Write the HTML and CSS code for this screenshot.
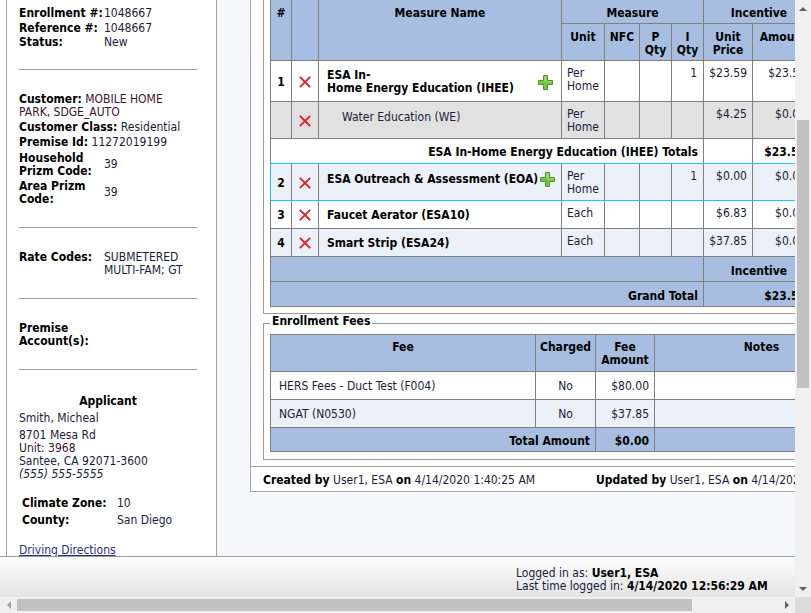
FILE: index.html
```html
<!DOCTYPE html>
<html>
<head>
<meta charset="utf-8">
<title>Enrollment</title>
<link rel="stylesheet" href="styles.css">
</head>
<body>
<div class="screen">
  <div class="viewport">
    <div class="content">
      <aside class="side">
        <div class="side-panel">
          <div class="sec-ids">
            <div class="kv"><span class="k">Enrollment #:</span><span class="v">1048667</span></div>
            <div class="kv"><span class="k">Reference #:</span><span class="v">1048667</span></div>
            <div class="kv"><span class="k">Status:</span><span class="v">New</span></div>
          </div>
          <div class="rule"></div>

          <div class="sec sec-cust">
            <p class="line"><b>Customer:</b> <span class="v-cust">MOBILE HOME PARK, SDGE_AUTO</span></p>
            <p class="line"><b>Customer Class:</b> <span class="v">Residential</span></p>
            <p class="line"><b>Premise Id:</b> <span class="v">11272019199</span></p>
            <div class="kv2 mid hh"><span class="k">Household Prizm Code:</span><span class="v">39</span></div>
            <div class="kv2 mid ap"><span class="k">Area Prizm Code:</span><span class="v">39</span></div>
          </div>
          <div class="rule"></div>

          <div class="sec">
            <div class="kv2"><span class="k">Rate Codes:</span><span class="v">SUBMETERED MULTI-FAM; GT</span></div>
          </div>
          <div class="rule"></div>

          <div class="sec">
            <div class="kv2"><span class="k">Premise Account(s):</span><span class="v"></span></div>
          </div>
          <div class="rule"></div>

          <div class="sec-app">
            <div class="app-title">Applicant</div>
            <div class="app-name">Smith, Micheal</div>
            <div class="app-addr">
              <div>8701 Mesa Rd</div>
              <div class="v-cust">Unit: 3968</div>
              <div>Santee, CA 92071-3600</div>
              <div class="phone">(555) 555-5555</div>
            </div>
            <div class="climate">
              <div class="crow"><span class="ck">Climate Zone:</span><span class="v">10</span></div>
              <div class="crow"><span class="ck">County:</span><span class="v">San Diego</span></div>
            </div>
            <a class="dir-link" href="#">Driving Directions</a>
          </div>
        </div>
      </aside>

      <main class="main">
        <div class="card">
          <div class="card-body">
            <fieldset class="fs fs-measures">
              <table class="grid measures">
                <colgroup>
                  <col class="c-num"><col class="c-del"><col class="c-name"><col class="c-unit"><col class="c-nfc"><col class="c-pq"><col class="c-iq"><col class="c-price"><col class="c-amt">
                </colgroup>
                <thead>
                  <tr class="h1">
                    <th rowspan="2">#</th>
                    <th rowspan="2"></th>
                    <th rowspan="2">Measure Name</th>
                    <th colspan="4">Measure</th>
                    <th colspan="2">Incentive</th>
                  </tr>
                  <tr class="h2">
                    <th>Unit</th>
                    <th>NFC</th>
                    <th>P<br>Qty</th>
                    <th>I<br>Qty</th>
                    <th>Unit<br>Price</th>
                    <th>Amount</th>
                  </tr>
                </thead>
                <tbody>
                  <tr class="r-white">
                    <td class="num">1</td>
                    <td class="del"><svg class="x-icon" viewBox="0 0 12 12" width="12" height="12"><path d="M1.5 1.5L10.5 10.5M10.5 1.5L1.5 10.5"/></svg></td>
                    <td class="name"><div class="name-wrap"><span class="name-text">ESA In-<br>Home Energy Education (IHEE)</span><svg class="plus-icon" viewBox="0 0 15 15" width="15" height="15"><path d="M5.5 0.5h4v5h5v4h-5v5h-4v-5h-5v-4h5z"/><path class="hl" d="M6.5 1.5h2v5h5v1h-5v-1h-2z"/></svg></div></td>
                    <td class="unit">Per<br>Home</td>
                    <td></td>
                    <td></td>
                    <td class="qty">1</td>
                    <td class="price">$23.59</td>
                    <td class="amt">$23.59</td>
                  </tr>
                  <tr class="r-gray">
                    <td class="num"></td>
                    <td class="del"><svg class="x-icon" viewBox="0 0 12 12" width="12" height="12"><path d="M1.5 1.5L10.5 10.5M10.5 1.5L1.5 10.5"/></svg></td>
                    <td class="name sub">Water Education (WE)</td>
                    <td class="unit">Per<br>Home</td>
                    <td></td>
                    <td></td>
                    <td class="qty"></td>
                    <td class="price">$4.25</td>
                    <td class="amt">$0.00</td>
                  </tr>
                  <tr class="r-total">
                    <td colspan="7" class="total-label">ESA In-Home Energy Education (IHEE) Totals</td>
                    <td></td>
                    <td class="amt strong">$23.59</td>
                  </tr>
                  <tr class="r-alt r-sel">
                    <td class="num">2</td>
                    <td class="del"><svg class="x-icon" viewBox="0 0 12 12" width="12" height="12"><path d="M1.5 1.5L10.5 10.5M10.5 1.5L1.5 10.5"/></svg></td>
                    <td class="name"><div class="name-wrap"><span class="name-text">ESA Outreach &amp; Assessment (EOA)</span><svg class="plus-icon" viewBox="0 0 15 15" width="15" height="15"><path d="M5.5 0.5h4v5h5v4h-5v5h-4v-5h-5v-4h5z"/><path class="hl" d="M6.5 1.5h2v5h5v1h-5v-1h-2z"/></svg></div></td>
                    <td class="unit">Per<br>Home</td>
                    <td></td>
                    <td></td>
                    <td class="qty">1</td>
                    <td class="price">$0.00</td>
                    <td class="amt">$0.00</td>
                  </tr>
                  <tr class="r-white">
                    <td class="num">3</td>
                    <td class="del"><svg class="x-icon" viewBox="0 0 12 12" width="12" height="12"><path d="M1.5 1.5L10.5 10.5M10.5 1.5L1.5 10.5"/></svg></td>
                    <td class="name">Faucet Aerator (ESA10)</td>
                    <td class="unit">Each</td>
                    <td></td>
                    <td></td>
                    <td class="qty"></td>
                    <td class="price">$6.83</td>
                    <td class="amt">$0.00</td>
                  </tr>
                  <tr class="r-alt">
                    <td class="num">4</td>
                    <td class="del"><svg class="x-icon" viewBox="0 0 12 12" width="12" height="12"><path d="M1.5 1.5L10.5 10.5M10.5 1.5L1.5 10.5"/></svg></td>
                    <td class="name">Smart Strip (ESA24)</td>
                    <td class="unit">Each</td>
                    <td></td>
                    <td></td>
                    <td class="qty"></td>
                    <td class="price">$37.85</td>
                    <td class="amt">$0.00</td>
                  </tr>
                </tbody>
                <tfoot>
                  <tr class="f-inc">
                    <td colspan="7"></td>
                    <th colspan="2">Incentive</th>
                  </tr>
                  <tr class="f-grand">
                    <th colspan="7" class="right">Grand Total</th>
                    <th colspan="2" class="right amt-total">$23.59</th>
                  </tr>
                </tfoot>
              </table>
            </fieldset>

            <fieldset class="fs fs-fees">
              <legend>Enrollment Fees</legend>
              <table class="grid fees">
                <colgroup>
                  <col class="c-fee"><col class="c-charged"><col class="c-feeamt"><col class="c-notes">
                </colgroup>
                <thead>
                  <tr>
                    <th>Fee</th>
                    <th>Charged</th>
                    <th>Fee<br>Amount</th>
                    <th>Notes</th>
                  </tr>
                </thead>
                <tbody>
                  <tr class="r-white">
                    <td class="fee-name">HERS Fees - Duct Test (F004)</td>
                    <td class="center">No</td>
                    <td class="fee-amt">$80.00</td>
                    <td></td>
                  </tr>
                  <tr class="r-alt">
                    <td class="fee-name">NGAT (N0530)</td>
                    <td class="center">No</td>
                    <td class="fee-amt">$37.85</td>
                    <td></td>
                  </tr>
                </tbody>
                <tfoot>
                  <tr>
                    <th colspan="2" class="right">Total Amount</th>
                    <th class="right">$0.00</th>
                    <th></th>
                  </tr>
                </tfoot>
              </table>
            </fieldset>
          </div>
          <div class="audit">
            <div class="created"><b>Created by</b> User1, ESA <b>on</b> 4/14/2020 1:40:25 AM</div>
            <div class="updated"><b>Updated by</b> User1, ESA <b>on</b> 4/14/2020 1:40:25 AM</div>
          </div>
        </div>
      </main>
    </div>
    <footer class="footer">
      <div class="login-info">
        <div>Logged in as: <b>User1, ESA</b></div>
        <div>Last time logged in: <b>4/14/2020 12:56:29 AM</b></div>
      </div>
    </footer>
  </div>

  <div class="vscroll">
    <div class="sb-btn"><span class="tri tri-up"></span></div>
    <div class="vtrack"><div class="vthumb"></div></div>
    <div class="sb-btn"><span class="tri tri-down"></span></div>
  </div>
  <div class="hscroll">
    <div class="sb-btn h"><span class="tri tri-left"></span></div>
    <div class="htrack"><div class="hthumb"></div></div>
    <div class="sb-btn h"><span class="tri tri-right"></span></div>
  </div>
  <div class="corner"></div>
</div>
</body>
</html>
```

FILE: styles.css
```css
* { box-sizing: border-box; }
html, body { margin: 0; padding: 0; }
body {
  width: 811px;
  height: 613px;
  overflow: hidden;
  background: #fff;
  font-family: "DejaVu Sans Condensed", "DejaVu Sans", Verdana, sans-serif;
  font-size: 12px;
  line-height: 13px;
  color: #1b1b3a;
}
p { margin: 0; }

.screen {
  display: grid;
  grid-template-columns: 795px 16px;
  grid-template-rows: 597px 16px;
  width: 811px;
  height: 613px;
}
.viewport { display: flex; flex-direction: column; overflow: hidden; min-width: 0; }
.content { flex: 1; display: flex; overflow: hidden; min-height: 0; }

/* ---------- left panel ---------- */
.side { width: 217px; flex-shrink: 0; padding-left: 6px; background: #fff; }
.side-panel {
  height: 100%;
  border-left: 1px solid #a3a3a3;
  border-right: 1px solid #a3a3a3;
  padding: 6px 19px 0 12px;
  background: #fff;
}
.kv { display: flex; line-height: 14.5px; }
.k { width: 85px; flex-shrink: 0; font-weight: bold; color: #000; }
.v { color: #1b1b3a; }
.v-cust { color: #3d1230; }
.rule { border-top: 1px solid #a0a0a0; height: 0; }
.sec-ids + .rule { margin-top: 19px; }
.sec { margin-top: 23px; margin-bottom: 21px; }
.sec-cust { margin-top: 23px; margin-bottom: 21px; }
.line { margin-top: 2px; }
.line:first-child { margin-top: 0; }
.line b { color: #000; }
.kv2 { display: flex; }
.kv2.mid { align-items: center; }
.kv2.hh { margin-top: 3px; }
.kv2.ap { margin-top: 2px; }

.sec-app { margin-top: 25px; }
.app-title { text-align: center; font-weight: bold; color: #000; }
.app-name { margin-top: 4px; }
.app-addr { margin-top: 4px; }
.phone { font-style: italic; }
.climate { margin: 14px 0 0 3px; }
.crow { display: flex; line-height: 17px; }
.ck { width: 95px; flex-shrink: 0; font-weight: bold; color: #000; }
.dir-link { display: block; margin-top: 15px; color: #2c2a85; text-decoration: underline; }

/* ---------- main ---------- */
.main {
  flex: 1;
  min-width: 0;
  background: #f7f8fc;
  padding-left: 33px;
  overflow: hidden;
}
.card {
  width: 640px;
  background: #fff;
  border: 1px solid #a3a3a3;
  border-top: 0;
}
.card-body { padding: 0 12px 6px; }

.fs {
  margin: 0;
  min-width: 0;
  border: 1px solid #9a9a9a;
  padding: 0 6px 6px;
}
.fs-measures { border-top: 0; }
.fs-fees { margin-top: 1px; padding: 2px 6px 7px; }
.fs legend {
  padding: 0 2px 4px;
  font-weight: bold;
  color: #000;
  line-height: 13px;
}

.grid {
  border-collapse: collapse;
  table-layout: fixed;
  border: 1px solid #808080;
}
.measures { border-top: 0; width: 544px; }
.fees { width: 598px; }
.grid th, .grid td {
  border: 1px solid #808080;
  line-height: 13px;
  vertical-align: top;
}
.grid th {
  background: #a7bee0;
  color: #000;
  font-weight: bold;
  text-align: center;
  padding: 7px 4px 3px;
}
.measures thead tr:first-child th { border-top: 0; }
.grid td { padding: 6px 5px 4px; color: #1b1b3a; }

.c-num { width: 21px; }
.c-del { width: 27px; }
.c-name { width: 243px; }
.c-unit { width: 43px; }
.c-nfc { width: 35px; }
.c-pq { width: 32px; }
.c-iq { width: 32px; }
.c-price { width: 49px; }
.c-amt { width: 62px; }

.c-fee { width: 265px; }
.c-charged { width: 60px; }
.c-feeamt { width: 59px; }
.c-notes { width: 214px; }

.r-white td { background: #fff; }
.r-alt td { background: #ecf0f8; }
.r-gray td { background: #e1e1e1; }
.r-total td { background: #fff; padding: 7px 5px 4px; }

.grid td.num {
  vertical-align: middle;
  text-align: center;
  font-weight: bold;
  color: #000;
  padding: 6px 2px 4px;
}
.grid td.del { vertical-align: middle; text-align: center; padding: 5px 2px 4px; }
.x-icon { display: block; margin: 0 auto; }
.x-icon path { stroke: #e3242b; stroke-width: 1.9; fill: none; stroke-linecap: square; }
.grid td.name { padding: 8px 8px 6px; font-weight: bold; color: #000; }
.grid td.name.sub { font-weight: normal; padding: 9px 8px 5px 23px; color: #1b1b3a; }
.name-wrap { display: flex; align-items: center; justify-content: space-between; }
.name-text { white-space: nowrap; flex-shrink: 0; }
.plus-icon { flex-shrink: 0; display: block; margin-left: 2px; }
.plus-icon path { fill: #74c447; stroke: #4b9a2b; stroke-width: 1; }
.plus-icon path.hl { fill: #a8e07e; stroke: none; }
.grid td.qty { text-align: right; padding-right: 6px; }
.grid td.price { text-align: right; padding-right: 5px; }
.grid td.amt { text-align: right; padding-right: 8px; }
.grid td.amt.strong { font-weight: bold; color: #000; }
.grid td.total-label { text-align: right; font-weight: bold; color: #000; }

/* selected row outline */
.r-total td { border-bottom-color: #22c3ee; }
.r-sel td { border-bottom-color: #22c3ee; }
.r-sel td:first-child { border-left-color: #22c3ee; }

.grid tfoot td { background: #a7bee0; padding: 7px 5px 4px; }
.grid tfoot th { padding: 8px 5px 3px; }
.f-grand th { padding: 7px 5px 2px; }
.grid th.right { text-align: right; }
.grid th.amt-total { padding-right: 8px; }

.fees td { padding: 8px 8px 6px; }
.fees td.center { text-align: center; }
.fees td.fee-amt { text-align: right; padding-right: 5px; }
.fees thead th { padding: 6px 4px 4px; }
.fees tfoot th { padding: 7px 5px 3px; }

.audit {
  border-top: 1px solid #a3a3a3;
  display: flex;
  padding: 7px 12px 4px;
  line-height: 13px;
  white-space: nowrap;
}
.audit b { color: #000; }
.created { width: 333px; flex-shrink: 0; }

/* ---------- footer ---------- */
.footer {
  height: 41px;
  flex-shrink: 0;
  border-top: 1px solid #9c9c9c;
  background: linear-gradient(#fdfdfd, #e4e4e4);
  padding: 10px 0 0 516px;
  line-height: 12.5px;
  color: #1b1b3a;
  white-space: nowrap;
}
.footer b { color: #000; }

/* ---------- scrollbars ---------- */
.vscroll {
  grid-column: 2;
  grid-row: 1;
  background: #f0f0f0;
  display: flex;
  flex-direction: column;
}
.sb-btn {
  height: 17px;
  flex-shrink: 0;
  display: flex;
  align-items: center;
  justify-content: center;
}
.sb-btn.h { width: 17px; height: 16px; }
.vtrack { flex: 1; padding: 103px 2px 0 2px; }
.vthumb { height: 268px; background: #c1c1c1; }
.hscroll {
  grid-column: 1;
  grid-row: 2;
  background: #f0f0f0;
  display: flex;
}
.htrack { flex: 1; padding: 2px 0; }
.hthumb { width: 675px; height: 12px; background: #c1c1c1; }
.corner { grid-column: 2; grid-row: 2; background: #dcdcdc; }

.tri { width: 0; height: 0; display: block; }
.tri-up { border-left: 4px solid transparent; border-right: 4px solid transparent; border-bottom: 4px solid #606060; }
.tri-down { border-left: 4px solid transparent; border-right: 4px solid transparent; border-top: 4px solid #606060; }
.tri-left { border-top: 4px solid transparent; border-bottom: 4px solid transparent; border-right: 4px solid #a3a3a3; }
.tri-right { border-top: 4px solid transparent; border-bottom: 4px solid transparent; border-left: 4px solid #606060; }
```
